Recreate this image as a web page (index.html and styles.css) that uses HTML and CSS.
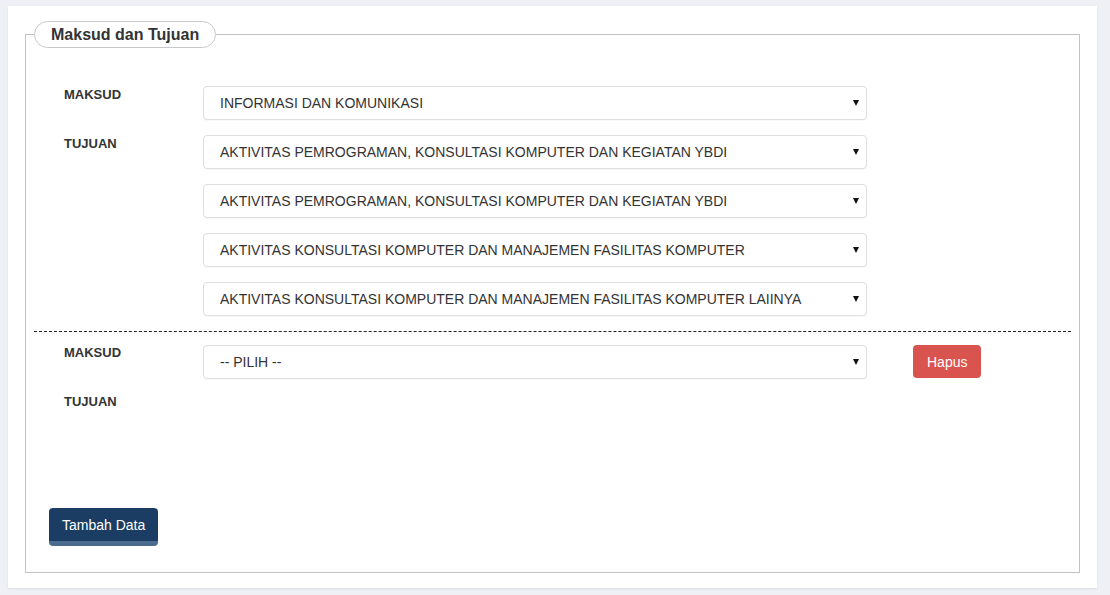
FILE: index.html
```html
<!DOCTYPE html>
<html lang="id">
<head>
<meta charset="utf-8">
<title>Maksud dan Tujuan</title>
<link rel="stylesheet" href="styles.css">
</head>
<body>
<div class="card">
  <fieldset class="group">
    <legend class="group-title">Maksud dan Tujuan</legend>

    <div class="section section-first">
      <div class="row">
        <label class="field-label">MAKSUD</label>
        <div class="select-wrap">
          <select class="select"><option>INFORMASI DAN KOMUNIKASI</option></select>
          <span class="caret"></span>
        </div>
      </div>
      <div class="row">
        <label class="field-label">TUJUAN</label>
        <div class="select-wrap">
          <select class="select"><option>AKTIVITAS PEMROGRAMAN, KONSULTASI KOMPUTER DAN KEGIATAN YBDI</option></select>
          <span class="caret"></span>
        </div>
      </div>
      <div class="row">
        <span class="field-label"></span>
        <div class="select-wrap">
          <select class="select"><option>AKTIVITAS PEMROGRAMAN, KONSULTASI KOMPUTER DAN KEGIATAN YBDI</option></select>
          <span class="caret"></span>
        </div>
      </div>
      <div class="row">
        <span class="field-label"></span>
        <div class="select-wrap">
          <select class="select"><option>AKTIVITAS KONSULTASI KOMPUTER DAN MANAJEMEN FASILITAS KOMPUTER</option></select>
          <span class="caret"></span>
        </div>
      </div>
      <div class="row">
        <span class="field-label"></span>
        <div class="select-wrap">
          <select class="select"><option>AKTIVITAS KONSULTASI KOMPUTER DAN MANAJEMEN FASILITAS KOMPUTER LAIINYA</option></select>
          <span class="caret"></span>
        </div>
      </div>
    </div>

    <hr class="divider">

    <div class="section section-second">
      <div class="row">
        <label class="field-label field-label-tight">MAKSUD</label>
        <div class="select-wrap">
          <select class="select"><option>-- PILIH --</option></select>
          <span class="caret"></span>
        </div>
        <button class="btn btn-danger" type="button">Hapus</button>
      </div>
      <div class="row row-empty">
        <label class="field-label field-label-tight">TUJUAN</label>
      </div>
    </div>

    <div class="actions">
      <button class="btn btn-primary" type="button">Tambah Data</button>
    </div>
  </fieldset>
</div>
</body>
</html>
```

FILE: styles.css
```css
html, body {
  margin: 0;
  padding: 0;
}

body {
  background: #eff0f5;
  font-family: "Liberation Sans", Arial, sans-serif;
  color: #333;
  padding: 6px 13px 7px 8px;
}

.card {
  background: #fff;
  padding: 15px 17px 15px 17px;
  box-shadow: 0 1px 2px rgba(0, 0, 0, 0.08);
}

.group {
  margin: 0;
  padding: 0 8px 26px 8px;
  border: 1px solid #c3c3c3;
  min-width: 0;
}

.group-title {
  font-size: 16px;
  font-weight: bold;
  color: #333;
  line-height: 25px;
  padding: 0 16px;
  border: 1px solid #c8c8c8;
  border-radius: 14px;
  background: #fff;
}

.section-first {
  margin-top: 38px;
  display: flex;
  flex-direction: column;
  gap: 15px;
}

.section-second {
  display: flex;
  flex-direction: column;
  gap: 15px;
}

.row {
  display: flex;
  align-items: flex-start;
  height: 34px;
}

.field-label {
  width: 139px;
  padding-left: 30px;
  flex: none;
  font-size: 13px;
  font-weight: bold;
  line-height: 18px;
  color: #333;
}

.field-label-tight {
  line-height: 16px;
}

.select-wrap {
  position: relative;
  width: 664px;
  flex: none;
}

.select {
  display: block;
  width: 100%;
  height: 34px;
  margin: 0;
  padding: 0 30px 0 16px;
  border: 1px solid #dedede;
  border-radius: 4px;
  background: #fff;
  font-family: "Liberation Sans", Arial, sans-serif;
  font-size: 14px;
  color: #333;
  -webkit-appearance: none;
  appearance: none;
  box-shadow: 0 1px 1px rgba(0, 0, 0, 0.03);
}

.caret {
  position: absolute;
  right: 8px;
  top: 14px;
  width: 0;
  height: 0;
  border-left: 3.5px solid transparent;
  border-right: 3.5px solid transparent;
  border-top: 6px solid #111;
  pointer-events: none;
}

.divider {
  margin: 15px 0 13px 0;
  border: 0;
  border-top: 1px dashed #222;
  height: 0;
}

.btn {
  font-family: "Liberation Sans", Arial, sans-serif;
  font-size: 14px;
  color: #fff;
  border: 0;
  border-radius: 4px;
  padding: 0 14px;
  cursor: pointer;
}

.btn-danger {
  margin-left: 46px;
  height: 33px;
  background: #d9534f;
}

.actions {
  margin-top: 80px;
  padding-left: 15px;
}

.btn-primary {
  height: 38px;
  padding: 2px 13px 0 13px;
  background: #1b3d63;
  border-bottom: 5px solid #4b6b8f;
  line-height: 31px;
}
```
